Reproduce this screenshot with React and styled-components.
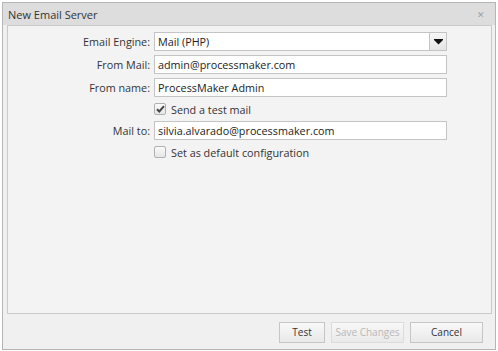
import React from "react";
import styled, { createGlobalStyle } from "styled-components";

const Global = createGlobalStyle`
  html, body { margin: 0; padding: 0; background: #ffffff; }
  body { font-family: "Open Sans", "Liberation Sans", sans-serif; font-size: 10.8px; color: #333; }
`;

const Window = styled.div`
  box-sizing: border-box;
  margin: 2px 0 0 2px;
  width: 494px;
  height: 348px;
  border: 1px solid #b5b5b5;
  background: #f0f0f0;
  display: flex;
  flex-direction: column;
`;

const Header = styled.div`
  height: 22px;
  background: #dddddd;
  display: flex;
  align-items: center;
  justify-content: space-between;
  padding: 0 10px 0 5px;
  color: #333;
  font-size: 11px;
`;

const Close = styled.span`
  color: #a0a0a0;
  font-size: 9px;
  line-height: 1;
`;

const Body = styled.div`
  flex: 1;
  display: flex;
  flex-direction: column;
  padding: 0 3px 3px 4px;
`;

const Panel = styled.div`
  box-sizing: border-box;
  height: 289px;
  border: 1px solid #c9c9c9;
  background: #f3f3f3;
  padding: 6px 0 0 0;
`;

const Form = styled.div`
  display: grid;
  grid-template-columns: 142px 293px;
  column-gap: 4px;
  row-gap: 4px;
  align-items: center;
`;

const Label = styled.label`
  text-align: right;
  color: #333;
  white-space: nowrap;
`;

const Input = styled.div`
  box-sizing: border-box;
  height: 19px;
  border: 1px solid #c4c4c4;
  background: #ffffff;
  display: flex;
  align-items: center;
  padding: 0 3px;
  color: #222;
`;

const Select = styled(Input)`
  padding: 0 0 0 3px;
  justify-content: space-between;
`;

const Arrow = styled.div`
  width: 16px;
  height: 17px;
  border-left: 1px solid #c4c4c4;
  background: linear-gradient(#f7f7f7, #e4e4e4);
  display: flex;
  align-items: center;
  justify-content: center;
`;

const CheckRow = styled.div`
  grid-column: 2;
  display: flex;
  align-items: center;
  gap: 5px;
  height: 16px;
  color: #333;
`;

const Box = styled.span`
  box-sizing: border-box;
  width: 12px;
  height: 12px;
  border: 1px solid #b0b0b0;
  border-radius: 2px;
  background: linear-gradient(#fafafa, #e6e6e6);
  display: flex;
  align-items: center;
  justify-content: center;
`;

const Footer = styled.div`
  flex: 1;
  display: flex;
  justify-content: flex-end;
  align-items: center;
  gap: 6px;
  padding: 4px 9px 0 0;
`;

const Button = styled.button`
  box-sizing: border-box;
  width: ${(p) => p.$w}px;
  height: 21px;
  border: 1px solid ${(p) => (p.disabled ? "#dcdcdc" : "#c6c6c6")};
  background: linear-gradient(#f8f8f8, #e9e9e9);
  font-family: "Open Sans", "Liberation Sans", sans-serif;
  font-size: 10px;
  color: ${(p) => (p.disabled ? "#b8b8b8" : "#333")};
  padding: 0;
`;

const Check = ({ checked }) => (
  <Box>
    {checked && (
      <svg width="9" height="8" viewBox="0 0 9 8">
        <path d="M1 4.2 L3.3 6.5 L8 1.2" fill="none" stroke="#444" strokeWidth="2" />
      </svg>
    )}
  </Box>
);

export default function App() {
  return (
    <>
      <Global />
      <Window>
        <Header>
          <span>New Email Server</span>
          <Close>✕</Close>
        </Header>
        <Body>
          <Panel>
            <Form>
              <Label>Email Engine:</Label>
              <Select>
                <span>Mail (PHP)</span>
                <Arrow>
                  <svg width="9" height="6" viewBox="0 0 9 6">
                    <path d="M0 0 L9 0 L9 1 L4.5 5.5 L0 1 Z" fill="#111" />
                  </svg>
                </Arrow>
              </Select>
              <Label>From Mail:</Label>
              <Input>admin@processmaker.com</Input>
              <Label>From name:</Label>
              <Input>ProcessMaker Admin</Input>
              <CheckRow>
                <Check checked />
                <span>Send a test mail</span>
              </CheckRow>
              <Label>Mail to:</Label>
              <Input>silvia.alvarado@processmaker.com</Input>
              <CheckRow>
                <Check />
                <span>Set as default configuration</span>
              </CheckRow>
            </Form>
          </Panel>
          <Footer>
            <Button $w={46}>Test</Button>
            <Button $w={73} disabled>Save Changes</Button>
            <Button $w={73}>Cancel</Button>
          </Footer>
        </Body>
      </Window>
    </>
  );
}
